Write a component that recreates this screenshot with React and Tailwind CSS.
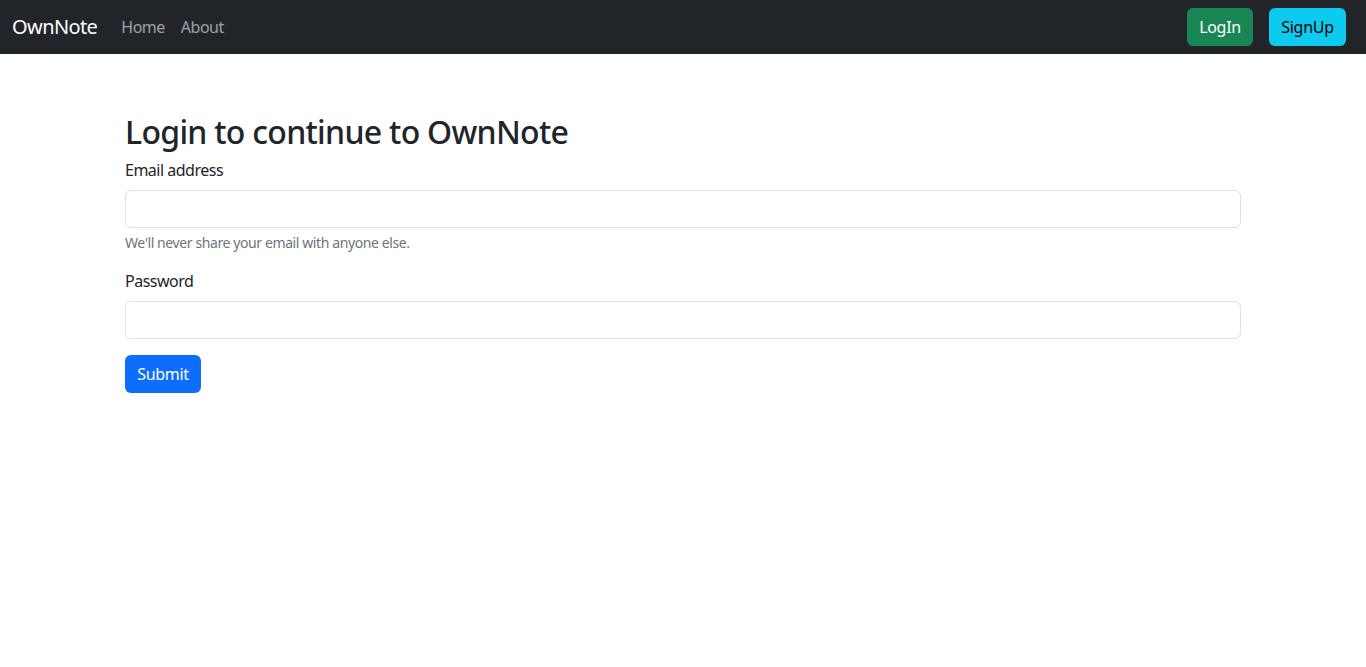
import React from "react";

// - top bar with brand, links and auth buttons
function Navbar() {
    return (
        <nav className="flex items-center justify-between h-[54px] bg-[#212529] px-3">
            <div className="flex items-center">
                <a href="#" className="text-[20px] text-white mr-4 leading-[30px] tracking-[-0.6px] -mt-px">OwnNote</a>
                <a href="#" className="text-[16px] text-white/55 px-2 leading-6 tracking-[-0.5px] -mt-px">Home</a>
                <a href="#" className="text-[16px] text-white/55 px-2 leading-6 tracking-[-0.5px] -mt-px">About</a>
            </div>
            <div className="flex items-center gap-4 pr-[8px]">
                <button className="h-[38px] w-[66px] rounded-[6px] bg-[#198754] text-white text-[16px] tracking-[-0.3px]">LogIn</button>
                <button className="h-[38px] w-[77px] rounded-[6px] bg-[#0dcaf0] text-black text-[16px] tracking-[-0.3px]">SignUp</button>
            </div>
        </nav>
    );
}

// - login form
function Login() {
    return (
        <div className="max-w-[1140px] mx-auto px-3 pt-[59px]">
            <h2 className="text-[32px] font-medium leading-[1.2] text-[#212529] mb-[7px] tracking-[-0.7px]">Login to continue to OwnNote</h2>
            <form>
                <div className="mb-4">
                    <label className="block text-[16px] leading-6 text-[#212529] mb-2 tracking-[-0.5px]">Email address</label>
                    <input type="email" className="block w-full h-[38px] border border-[#dee2e6] rounded-[6px] px-3" />
                    <div className="text-[14px] leading-[21px] text-[#6c757d] mt-1 tracking-[-0.4px]">We'll never share your email with anyone else.</div>
                </div>
                <div className="mb-4">
                    <label className="block text-[16px] leading-6 text-[#212529] mb-2 tracking-[-0.5px]">Password</label>
                    <input type="password" className="block w-full h-[38px] border border-[#dee2e6] rounded-[6px] px-3" />
                </div>
                <button type="submit" className="h-[38px] w-[76px] rounded-[6px] bg-[#0d6efd] text-white text-[16px] tracking-[-0.3px]">Submit</button>
            </form>
        </div>
    );
}

export default function App() {
    return (
        <div className="min-h-[667px] bg-white font-['Noto_Sans',sans-serif]">
            <Navbar />
            <Login />
        </div>
    );
}
